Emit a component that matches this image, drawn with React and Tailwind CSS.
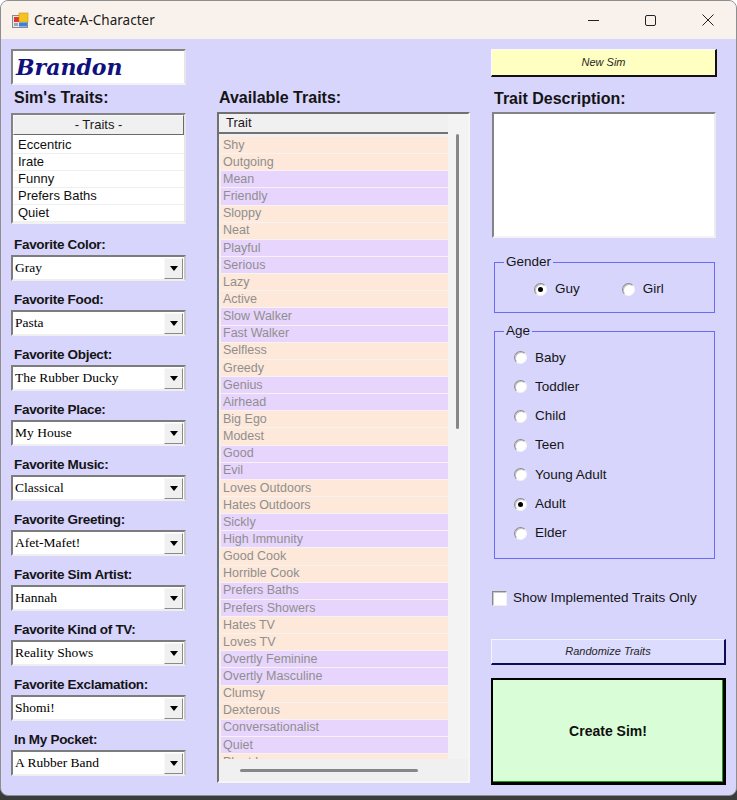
import React from "react";

const SANS = { fontFamily: '"Liberation Sans", Arial, sans-serif' };
const SERIF = { fontFamily: '"Liberation Serif", "Times New Roman", serif' };

const simTraits = ["Eccentric", "Irate", "Funny", "Prefers Baths", "Quiet"];

const available = [
  "Shy", "Outgoing", "Mean", "Friendly", "Sloppy", "Neat", "Playful", "Serious",
  "Lazy", "Active", "Slow Walker", "Fast Walker", "Selfless", "Greedy", "Genius",
  "Airhead", "Big Ego", "Modest", "Good", "Evil", "Loves Outdoors", "Hates Outdoors",
  "Sickly", "High Immunity", "Good Cook", "Horrible Cook", "Prefers Baths",
  "Prefers Showers", "Hates TV", "Loves TV", "Overtly Feminine", "Overtly Masculine",
  "Clumsy", "Dexterous", "Conversationalist", "Quiet", "Plant Lover",
];

const favorites = [
  ["Favorite Color:", "Gray"],
  ["Favorite Food:", "Pasta"],
  ["Favorite Object:", "The Rubber Ducky"],
  ["Favorite Place:", "My House"],
  ["Favorite Music:", "Classical"],
  ["Favorite Greeting:", "Afet-Mafet!"],
  ["Favorite Sim Artist:", "Hannah"],
  ["Favorite Kind of TV:", "Reality Shows"],
  ["Favorite Exclamation:", "Shomi!"],
  ["In My Pocket:", "A Rubber Band"],
];

const ages = ["Baby", "Toddler", "Child", "Teen", "Young Adult", "Adult", "Elder"];

function AppIcon() {
  return (
    <svg width="17" height="17" viewBox="0 0 17 17">
      <rect x="0.5" y="3.5" width="15" height="12" fill="#e8e8e8" stroke="#8a8a8a" />
      <rect x="2" y="5" width="5" height="5" fill="#e2342c" />
      <rect x="7" y="1" width="9" height="9" fill="#f6c21c" stroke="#c9961a" strokeWidth="0.6" />
      <rect x="7" y="10.5" width="8" height="4" fill="#3d7fe0" />
      <rect x="2" y="11" width="4" height="3" fill="#9aa4b4" />
    </svg>
  );
}

function TitleBar() {
  return (
    <div className="flex h-[38px] items-center bg-[#f9f2ec]">
      <div className="ml-[11px] flex h-[17px] w-[17px] items-center justify-center">
        <AppIcon />
      </div>
      <div
        className="ml-[5px] text-[13.5px] text-[#1b1b1b]"
        style={{ fontFamily: '"Noto Sans", "Open Sans", sans-serif' }}
      >
        Create-A-Character
      </div>
      <div className="ml-auto flex h-full">
        <div className="flex w-[57px] items-center justify-center">
          <svg width="11" height="11" viewBox="0 0 11 11">
            <line x1="0" y1="5.5" x2="11" y2="5.5" stroke="#222" strokeWidth="1" />
          </svg>
        </div>
        <div className="flex w-[57px] items-center justify-center">
          <svg width="11" height="11" viewBox="0 0 11 11">
            <rect x="0.5" y="0.5" width="10" height="10" rx="1.5" fill="none" stroke="#222" strokeWidth="1" />
          </svg>
        </div>
        <div className="flex w-[57px] items-center justify-center">
          <svg width="12" height="12" viewBox="0 0 12 12">
            <path d="M0.5 0.5 L11.5 11.5 M11.5 0.5 L0.5 11.5" stroke="#222" strokeWidth="1" />
          </svg>
        </div>
      </div>
    </div>
  );
}

function ComboBox({ value }) {
  return (
    <div className="flex h-[26px] w-[175px] items-center border-2 border-t-[#7c7c7c] border-l-[#7c7c7c] border-r-[#c8c8c8] border-b-[#efefef] bg-white">
      <div className="flex-1 pl-[2px] text-[13.5px] leading-none text-black" style={SERIF}>
        {value}
      </div>
      <div className="mr-[1px] flex h-[21px] w-[19px] items-center justify-center border border-t-[#f8f8f8] border-l-[#f8f8f8] border-r-[#8a8a8a] border-b-[#8a8a8a] bg-[#f0f0f0]">
        <svg width="8" height="5" viewBox="0 0 8 5">
          <polygon points="0,0 8,0 4,5" fill="#000" />
        </svg>
      </div>
    </div>
  );
}

function Radio({ checked }) {
  return (
    <div className="flex h-[13px] w-[13px] items-center justify-center rounded-full border border-t-[#8c8c8c] border-l-[#8c8c8c] border-r-[#f4f4f4] border-b-[#f4f4f4] bg-white shadow-[inset_1px_1px_0_#c4c4c4]">
      {checked && <div className="h-[5px] w-[5px] rounded-full bg-black" />}
    </div>
  );
}

function LeftColumn() {
  return (
    <div className="flex w-[175px] flex-col">
      <div className="flex h-[36px] items-center border-2 border-t-[#838383] border-l-[#838383] border-r-[#e6e6e6] border-b-[#f2f2f2] bg-white pl-[3px]">
        <span
          className="text-[22px] font-bold italic leading-none text-[#11117e]"
          style={{ fontFamily: '"DejaVu Serif", serif' }}
        >
          Brandon
        </span>
      </div>
      <div className="mt-[3px] flex h-[20px] items-center pl-[3px] text-[16px] font-bold text-[#141414]" style={SANS}>
        Sim's Traits:
      </div>
      <div className="mt-[5px] h-[111px] border-2 border-t-[#838383] border-l-[#838383] border-r-[#e6e6e6] border-b-[#f2f2f2] bg-white">
        <div className="flex h-[20px] items-center justify-center border border-t-[#fafafa] border-l-[#fafafa] border-r-[#6a6a6a] border-b-[#6a6a6a] bg-[#f0f0f0] text-[13px] text-[#1a1a1a]" style={SANS}>
          - Traits -
        </div>
        <div className="mt-[2px]">
          {simTraits.map((t) => (
            <div
              key={t}
              className="flex h-[17px] items-center border-b border-[#efefef] pl-[5px] text-[13px] text-[#101010]"
              style={SANS}
            >
              {t}
            </div>
          ))}
        </div>
      </div>
      <div className="mt-[12px] flex flex-col gap-[10px]">
        {favorites.map(([label, value]) => (
          <div key={label} className="flex flex-col">
            <div className="flex h-[18px] items-center pl-[3px] text-[13.5px] font-bold tracking-[-0.3px] text-[#141414]" style={SANS}>
              {label}
            </div>
            <div className="mt-[1px]">
              <ComboBox value={value} />
            </div>
          </div>
        ))}
      </div>
    </div>
  );
}

function TraitList() {
  return (
    <div className="mt-[4px] flex h-[671px] w-[253px] flex-col border-2 border-t-[#707070] border-l-[#707070] border-r-[#f6f6f6] border-b-[#f6f6f6] bg-[#f0f0f0]">
      <div className="flex flex-1 overflow-hidden">
        <div className="flex w-[229px] flex-col">
          <div className="flex h-[20px] items-center border-b-2 border-[#727272] pl-[7px] text-[13px] text-[#1c1424]" style={SANS}>
            Trait
          </div>
          <div className="mt-[3px] h-[624px] overflow-hidden pl-[2px]">
            {available.map((t, i) => (
              <div
                key={t + i}
                className={
                  "flex h-[17.15px] items-center border-b border-[#f7f3f3] pl-[2px] text-[12.5px] text-[#8f8f8f] " +
                  (Math.floor(i / 2) % 2 === 0 ? "bg-[#fde8d9]" : "bg-[#e8d5fd]")
                }
                style={SANS}
              >
                {t}
              </div>
            ))}
          </div>
        </div>
        <div className="flex flex-1 justify-center bg-[#f3f3f3] pt-[20px]">
          <div className="ml-[-2px] h-[295px] w-[3px] rounded-full bg-[#878787]" />
        </div>
      </div>
      <div className="flex h-[22px] items-center pl-[21px]">
        <div className="h-[3px] w-[178px] rounded-full bg-[#878787]" />
      </div>
    </div>
  );
}

function MiddleColumn() {
  return (
    <div className="ml-[31px] flex w-[253px] flex-col">
      <div className="mt-[39px] flex h-[20px] items-center pl-[2px] text-[16px] font-bold text-[#141414]" style={SANS}>
        Available Traits:
      </div>
      <TraitList />
    </div>
  );
}

function RightColumn() {
  return (
    <div className="ml-[20px] flex w-[236px] flex-col" style={SANS}>
      <button className="ml-[1px] flex h-[28px] w-[226px] items-center justify-center border border-b-2 border-r-2 border-t-[#fbfbfb] border-l-[#fbfbfb] border-r-[#111] border-b-[#111] bg-[#ffffc2] text-[11px] italic text-[#262626]">
        New Sim
      </button>
      <div className="mt-[12px] flex h-[20px] items-center pl-[4px] text-[16px] font-bold text-[#141414]">
        Trait Description:
      </div>
      <div className="ml-[2px] mt-[3px] h-[126px] w-[224px] border-2 border-t-[#838383] border-l-[#838383] border-r-[#ececec] border-b-[#f4f4f4] bg-white" />

      <fieldset className="ml-[4px] mt-[16px] h-[59px] w-[221px] border border-[#6b6bf5] px-0">
        <legend className="ml-[9px] px-[2px] text-[13.5px] leading-[16px] text-[#151515]">Gender</legend>
        <div className="mt-[9px] flex h-[20px] items-center">
          <div className="ml-[39px] flex items-center">
            <Radio checked />
            <span className="ml-[8px] text-[13.5px] text-[#151515]">Guy</span>
          </div>
          <div className="ml-[42px] flex items-center">
            <Radio />
            <span className="ml-[8px] text-[13.5px] text-[#151515]">Girl</span>
          </div>
        </div>
      </fieldset>

      <fieldset className="ml-[4px] mt-[10px] h-[236px] w-[221px] border border-[#6b6bf5] px-0">
        <legend className="ml-[9px] px-[2px] text-[13.5px] leading-[16px] text-[#151515]">Age</legend>
        <div className="mt-[4px] flex flex-col">
          {ages.map((a) => (
            <div key={a} className="flex h-[29.3px] items-center pl-[19px]">
              <Radio checked={a === "Adult"} />
              <span className="ml-[8px] text-[13.5px] text-[#151515]">{a}</span>
            </div>
          ))}
        </div>
      </fieldset>

      <div className="mt-[32px] flex h-[15px] items-center">
        <div className="ml-[2px] h-[15px] w-[15px] border border-t-[#8a8a8a] border-l-[#8a8a8a] border-r-[#f0f0f0] border-b-[#f0f0f0] bg-white shadow-[inset_1px_1px_0_#c8c8c8]" />
        <span className="ml-[6px] text-[13.5px] text-[#151515]">Show Implemented Traits Only</span>
      </div>

      <button className="ml-[1px] mt-[33px] flex h-[26px] w-[235px] items-center justify-center border border-b-2 border-r-2 border-t-[#f4f4ff] border-l-[#f4f4ff] border-r-[#0d0d55] border-b-[#0d0d55] bg-[#dcdcfe] text-[11px] italic text-[#262626]">
        Randomize Traits
      </button>

      <button className="ml-[1px] mt-[13px] flex h-[107px] w-[235px] items-center justify-center border-2 border-r-[3px] border-b-[3px] border-black bg-[#d9fdd6] text-[14px] font-bold text-[#101010] shadow-[inset_-1px_-1px_0_#1f9a1f]">
        Create Sim!
      </button>
    </div>
  );
}

export default function App() {
  return (
    <div className="h-[800px] w-[737px] overflow-hidden bg-[linear-gradient(to_bottom,#ffffff_0,#ffffff_760px,#3b3b3b_760px)]">
      <div className="flex h-[796px] w-[737px] flex-col overflow-hidden rounded-[8px] border border-[#8e8e8e] bg-[#d8d5fd]">
        <TitleBar />
        <div className="flex flex-1 pl-[10px] pt-[10px]">
          <LeftColumn />
          <MiddleColumn />
          <RightColumn />
        </div>
      </div>
    </div>
  );
}
